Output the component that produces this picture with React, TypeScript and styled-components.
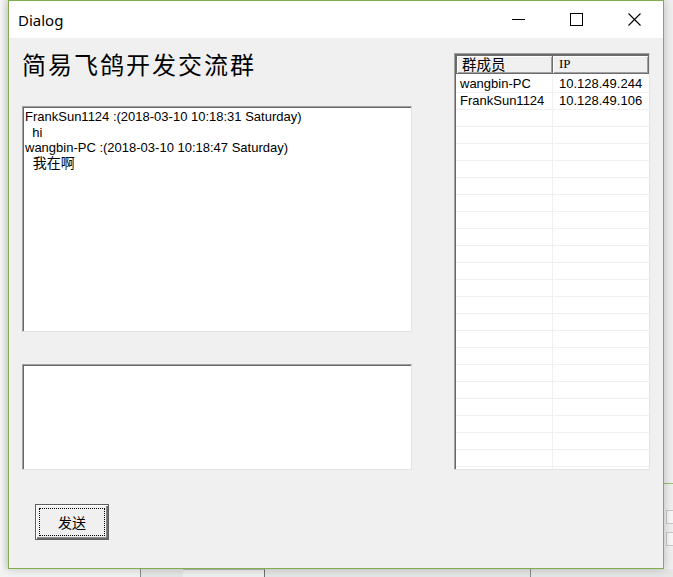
import React from "react";
import styled, { createGlobalStyle } from "styled-components";

const GlobalStyle = createGlobalStyle`
  html, body {
    margin: 0;
    padding: 0;
    background: #f2f2f2;
  }
  body {
    font-family: "Liberation Sans", "Noto Sans CJK SC", sans-serif;
    color: #000;
  }
  * {
    box-sizing: border-box;
  }
`;

const Desktop = styled.div`
  width: 673px;
  height: 577px;
  overflow: hidden;
  display: grid;
  grid-template-columns: 8px 656px 9px;
  grid-template-rows: 569px 8px;
  background: #f2f2f2;
`;

const LeftEdge = styled.div`
  background: linear-gradient(to right, #f8f8f8, #e8e8e8);
`;

const RightEdge = styled.div`
  display: flex;
  flex-direction: column;
  background: #efefef;
`;

const EdgeSpacer = styled.div<{ $h: number }>`
  height: ${(p) => p.$h}px;
  flex-shrink: 0;
`;

const EdgeLine = styled.div<{ $color: string }>`
  height: 1px;
  background: ${(p) => p.$color};
`;

const EdgeBox = styled.div`
  height: 14px;
  margin-left: 2px;
  border: 1px solid #c8c8c8;
  border-right: none;
  background: #f6f6f6;
`;

const Window = styled.div`
  grid-column: 2;
  grid-row: 1;
  position: relative;
  z-index: 1;
  display: flex;
  flex-direction: column;
  border: 1px solid #82ad4e;
  background: #f0f0f0;
  box-shadow: 0 0 9px rgba(0, 0, 0, 0.22);
`;

const TitleBar = styled.div`
  height: 37px;
  flex-shrink: 0;
  display: flex;
  align-items: center;
  background: #fff;
`;

const Title = styled.div`
  flex: 1;
  padding-left: 9px;
  font-family: "Noto Sans", "Open Sans", sans-serif;
  font-size: 15px;
  line-height: 20px;
`;

const Controls = styled.div`
  display: flex;
  height: 100%;
`;

const ControlButton = styled.div`
  width: 58px;
  height: 100%;
  display: flex;
  align-items: center;
  justify-content: center;
`;

const Body = styled.div`
  flex: 1;
  display: flex;
  flex-direction: column;
`;

const Main = styled.div`
  display: flex;
  padding-left: 13px;
`;

const LeftColumn = styled.div`
  width: 390px;
  padding-top: 11px;
  display: flex;
  flex-direction: column;
`;

const Heading = styled.h1`
  margin: 0 0 27px;
  height: 30px;
  font-family: "Noto Sans CJK SC", sans-serif;
  font-size: 24px;
  font-weight: normal;
  line-height: 30px;
  letter-spacing: 2px;
`;

const TextBox = styled.div<{ $height: number; $gap?: number }>`
  height: ${(p) => p.$height}px;
  margin-bottom: ${(p) => p.$gap ?? 0}px;
  padding: 2px 2px 0;
  background: #fff;
  border-top: 1px solid #a0a0a0;
  border-left: 1px solid #a0a0a0;
  border-right: 1px solid #e3e3e3;
  border-bottom: 1px solid #e3e3e3;
  box-shadow: inset 1px 1px 0 #696969;
  overflow: hidden;
  font-size: 13px;
  line-height: 15.5px;
`;

const Line = styled.div<{ $cjk?: boolean }>`
  height: 15.5px;
  white-space: pre;
  font-family: "Liberation Sans", "Noto Sans CJK SC", sans-serif;
  font-size: ${(p) => (p.$cjk ? "14px" : "13px")};
  line-height: 15.5px;
`;

const RightColumn = styled.div`
  margin-left: 42px;
  padding-top: 15px;
`;

const MemberTable = styled.div`
  width: 196px;
  height: 417px;
  overflow: hidden;
  background: #fff;
  border-top: 1px solid #a0a0a0;
  border-left: 1px solid #a0a0a0;
  border-right: 1px solid #e3e3e3;
  border-bottom: 1px solid #e3e3e3;
  box-shadow: inset 1px 1px 0 #696969;
  padding: 1px 0 0 1px;
`;

const HeaderRow = styled.div`
  display: grid;
  grid-template-columns: 97px 1fr;
  height: 19px;
`;

const HeaderCell = styled.div<{ $serif?: boolean }>`
  border: 1px solid #6e6e6e;
  border-left: ${(p) => (p.$serif ? "none" : "1px solid #6e6e6e")};
  background: #f0f0f0;
  box-shadow: inset 1px 1px 0 #fff, inset -1px -1px 0 #a0a0a0;
  padding-left: ${(p) => (p.$serif ? "6px" : "5px")};
  font-family: ${(p) =>
    p.$serif
      ? `"Liberation Serif", serif`
      : `"Noto Sans CJK SC", sans-serif`};
  font-size: ${(p) => (p.$serif ? "13px" : "14.5px")};
  line-height: 16px;
  white-space: nowrap;
`;

const Rows = styled.div`
  padding-top: 2px;
`;

const Row = styled.div`
  display: grid;
  grid-template-columns: 97px 1fr;
  height: 17px;
`;

const Cell = styled.div<{ $first?: boolean }>`
  border-bottom: 1px solid #f0f0f0;
  border-right: ${(p) => (p.$first ? "1px solid #f0f0f0" : "none")};
  padding-left: ${(p) => (p.$first ? "4px" : "6px")};
  font-size: 13px;
  line-height: 16px;
  white-space: nowrap;
`;

const ButtonRow = styled.div`
  padding: 34px 0 0 26px;
`;

const SendButton = styled.button`
  width: 74px;
  height: 36px;
  padding: 3px;
  display: flex;
  background: #f0f0f0;
  border: 1px solid #5e5e5e;
  box-shadow: inset 1px 1px 0 #fff, inset -1px -1px 0 #696969,
    inset -2px -2px 0 #8a8a8a;
  font-family: "Noto Sans CJK SC", sans-serif;
  font-size: 14px;
  color: #000;
`;

const FocusRing = styled.span`
  flex: 1;
  display: flex;
  align-items: center;
  justify-content: center;
  border: 1px dotted #000;
`;

const BottomStrip = styled.div`
  grid-column: 1 / -1;
  grid-row: 2;
  display: flex;
  background: #e6e6e6;
`;

const StripPart = styled.div<{ $w: number; $bg: string }>`
  width: ${(p) => p.$w}px;
  flex-shrink: 0;
  background: ${(p) => p.$bg};
`;

const StripDivider = styled.div`
  width: 1px;
  background: #8a8a8a;
`;

const StripTab = styled.div`
  width: 82px;
  background: #f0f0f0;
  border-top: 1px solid #b8b8b8;
  border-right: 1px solid #707070;
`;

const messages = [
  { head: "FrankSun1124 :(2018-03-10 10:18:31 Saturday)", text: "hi" },
  { head: "wangbin-PC :(2018-03-10 10:18:47 Saturday)", text: "我在啊", cjk: true },
];

const members = [
  { name: "wangbin-PC", ip: "10.128.49.244" },
  { name: "FrankSun1124", ip: "10.128.49.106" },
];

const rows = [...members, ...Array.from({ length: 22 }, () => ({ name: "", ip: "" }))];

const App: React.FC = () => {
  return (
    <>
      <GlobalStyle />
      <Desktop>
        <LeftEdge />
        <Window>
          <TitleBar>
            <Title>Dialog</Title>
            <Controls>
              <ControlButton>
                <svg width="13" height="13" viewBox="0 0 13 13">
                  <path d="M0 6.5 H13" stroke="#000" strokeWidth="1" />
                </svg>
              </ControlButton>
              <ControlButton>
                <svg width="13" height="13" viewBox="0 0 13 13">
                  <rect x="0.5" y="0.5" width="12" height="12" fill="none" stroke="#000" />
                </svg>
              </ControlButton>
              <ControlButton>
                <svg width="13" height="13" viewBox="0 0 13 13">
                  <path d="M0.5 0.5 L12.5 12.5 M12.5 0.5 L0.5 12.5" stroke="#000" strokeWidth="1.1" />
                </svg>
              </ControlButton>
            </Controls>
          </TitleBar>
          <Body>
            <Main>
              <LeftColumn>
                <Heading>简易飞鸽开发交流群</Heading>
                <TextBox $height={226} $gap={32}>
                  {messages.map((m) => (
                    <React.Fragment key={m.head}>
                      <Line>{m.head}</Line>
                      <Line $cjk={m.cjk}>{"  " + m.text}</Line>
                    </React.Fragment>
                  ))}
                </TextBox>
                <TextBox $height={106} />
              </LeftColumn>
              <RightColumn>
                <MemberTable>
                  <HeaderRow>
                    <HeaderCell>群成员</HeaderCell>
                    <HeaderCell $serif>IP</HeaderCell>
                  </HeaderRow>
                  <Rows>
                    {rows.map((r, i) => (
                      <Row key={i}>
                        <Cell $first>{r.name}</Cell>
                        <Cell>{r.ip}</Cell>
                      </Row>
                    ))}
                  </Rows>
                </MemberTable>
              </RightColumn>
            </Main>
            <ButtonRow>
              <SendButton>
                <FocusRing>发送</FocusRing>
              </SendButton>
            </ButtonRow>
          </Body>
        </Window>
        <RightEdge>
          <EdgeSpacer $h={483} />
          <EdgeLine $color="#9dbf73" />
          <EdgeSpacer $h={26} />
          <EdgeBox />
          <EdgeSpacer $h={8} />
          <EdgeBox />
        </RightEdge>
        <BottomStrip>
          <StripPart $w={140} $bg="#f3f3f3" />
          <StripDivider />
          <StripPart $w={42} $bg="#e6e6e6" />
          <StripTab />
          <StripPart $w={265} $bg="#e6e6e6" />
          <StripDivider />
        </BottomStrip>
      </Desktop>
    </>
  );
};

export default App;
